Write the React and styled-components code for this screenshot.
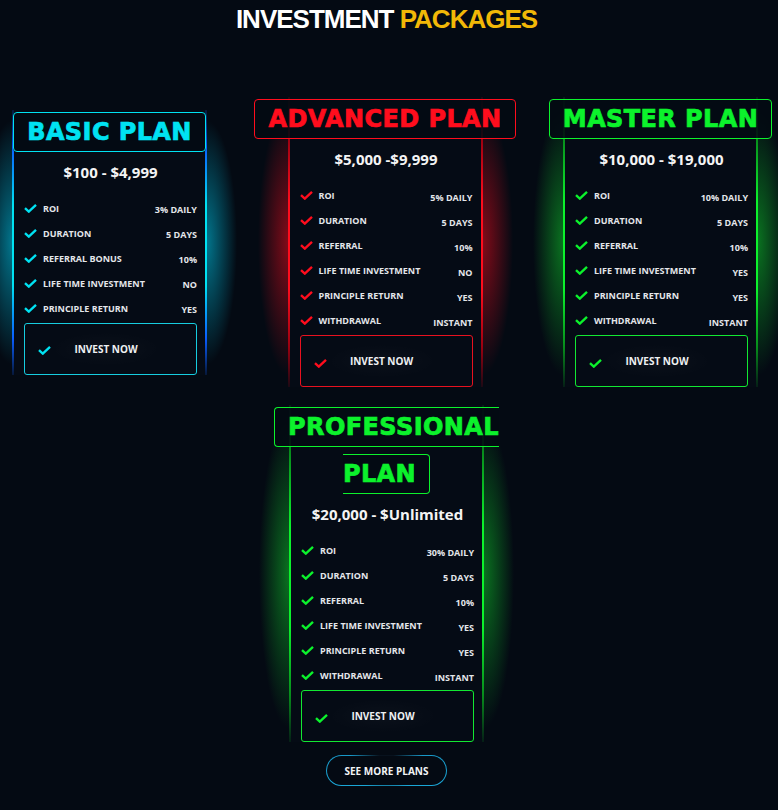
import styled, { createGlobalStyle } from "styled-components";

const GlobalStyle = createGlobalStyle`
  body {
    margin: 0;
    background: #040a13;
    font-family: "Open Sans", "Liberation Sans", sans-serif;
  }
`

const tones = {
    cyan: {accent: '#00e2f2', edge: '#0a5cff', glow: 'rgba(0, 205, 240, 0.55)', button: '#16cde0'},
    red: {accent: '#ff0d1d', edge: '#9a0010', glow: 'rgba(255, 12, 30, 0.5)', button: '#e8111f'},
    green: {accent: '#0cf22c', edge: '#078c1c', glow: 'rgba(18, 240, 48, 0.45)', button: '#12e832'},
}

const plans = [
    {
        name: 'BASIC PLAN', tone: 'cyan', price: '$100 - $4,999',
        rows: [['ROI', '3% DAILY'], ['DURATION', '5 DAYS'], ['REFERRAL BONUS', '10%'],
            ['LIFE TIME INVESTMENT', 'NO'], ['PRINCIPLE RETURN', 'YES']],
    },
    {
        name: 'ADVANCED PLAN', tone: 'red', price: '$5,000 -$9,999',
        rows: [['ROI', '5% DAILY'], ['DURATION', '5 DAYS'], ['REFERRAL', '10%'],
            ['LIFE TIME INVESTMENT', 'NO'], ['PRINCIPLE RETURN', 'YES'], ['WITHDRAWAL', 'INSTANT']],
    },
    {
        name: 'MASTER PLAN', tone: 'green', price: '$10,000 - $19,000',
        rows: [['ROI', '10% DAILY'], ['DURATION', '5 DAYS'], ['REFERRAL', '10%'],
            ['LIFE TIME INVESTMENT', 'YES'], ['PRINCIPLE RETURN', 'YES'], ['WITHDRAWAL', 'INSTANT']],
    },
    {
        name: 'PROFESSIONAL PLAN', tone: 'green', price: '$20,000 - $Unlimited',
        rows: [['ROI', '30% DAILY'], ['DURATION', '5 DAYS'], ['REFERRAL', '10%'],
            ['LIFE TIME INVESTMENT', 'YES'], ['PRINCIPLE RETURN', 'YES'], ['WITHDRAWAL', 'INSTANT']],
    },
]

const Page = styled.div`
  display: flex;
  flex-direction: column;
  align-items: center;
  padding: 4px 5px 40px 0;
`
const Heading = styled.h1`
  margin: 0;
  font-family: "Liberation Sans", Arial, sans-serif;
  font-size: 26px;
  line-height: 30px;
  font-weight: 700;
  letter-spacing: -1px;
  color: #ffffff;

  & > span {
    color: #f2b807;
  }
`
const TopRow = styled.div`
  align-self: stretch;
  display: flex;
  justify-content: space-between;
  align-items: center;
  margin-top: 63px;
  padding: 0 15px 0 12px;
`
const BottomRow = styled.div`
  display: flex;
  justify-content: center;
  margin-top: 18px;
`
const Card = styled.div`
  position: relative;
  box-sizing: border-box;
  width: 195px;
  padding: 0 8px 0 10px;
  background: #050b15;
  border-style: solid;
  border-width: 0 2px;
  border-image: linear-gradient(to bottom,
  ${p => p.$tone.edge}22 0%,
  ${p => p.$tone.edge} 14%,
  ${p => p.$tone.accent} 36%,
  ${p => p.$tone.accent} 66%,
  ${p => p.$tone.edge} 86%,
  ${p => p.$tone.edge}22 100%) 1;

  &::before, &::after {
    content: '';
    position: absolute;
    top: 0;
    bottom: 0;
    width: 30px;
    pointer-events: none;
  }

  &::before {
    right: calc(100% + 2px);
    background: radial-gradient(ellipse 100% 46% at 100% 50%, ${p => p.$tone.glow}, transparent 100%);
  }

  &::after {
    left: calc(100% + 2px);
    background: radial-gradient(ellipse 100% 46% at 0% 50%, ${p => p.$tone.glow}, transparent 100%);
  }
`
const TitleWrap = styled.div`
  position: relative;
  z-index: 1;
  margin: 0 -56px 0 -58px;
  text-align: center;
  line-height: 45px;
`
const TitleBox = styled.span`
  padding: 5px 13px;
  border: 1px solid ${p => p.$color};
  border-radius: 4px;
  background: rgba(4, 10, 19, 0.86);
  color: ${p => p.$color};
  font-family: "DejaVu Sans", Verdana, sans-serif;
  font-size: 24px;
  font-weight: 700;
  letter-spacing: 0.4px;
  -webkit-text-stroke: 0.7px ${p => p.$color};
`
const Price = styled.div`
  margin-top: 5px;
  text-align: center;
  color: #f4f4f4;
  font-size: 15px;
  line-height: 20px;
  font-weight: 700;
`
const Features = styled.ul`
  list-style: none;
  margin: 14px 0 2px;
  padding: 0;
`
const Feature = styled.li`
  display: flex;
  align-items: center;
  height: 25px;
  color: #e4e6ea;
  font-size: 9px;
  font-weight: 700;
`
const Label = styled.span`
  flex: 1;
  margin-left: 6px;
`
const Value = styled.span`
  margin-top: 3px;
`
const InvestButton = styled.button`
  display: flex;
  align-items: center;
  width: 100%;
  height: 52px;
  padding: 0 35px 0 13px;
  background: transparent;
  border: 1px solid ${p => p.$color};
  border-radius: 3px;
  cursor: pointer;

  & > svg {
    margin-top: 4px;
  }
`
const InvestLabel = styled.span`
  flex: 1;
  padding: 10px 0;
  border-radius: 50%;
  background: radial-gradient(ellipse 50% 50% at center, rgba(255, 255, 255, 0.025), transparent);
  color: #eef0f2;
  font-family: "Open Sans", sans-serif;
  font-size: 10px;
  font-weight: 700;
`
const MoreButton = styled.button`
  margin-top: 13px;
  width: 121px;
  height: 31px;
  border: 1px solid transparent;
  border-radius: 16px;
  background: linear-gradient(#040a13, #040a13) padding-box,
  radial-gradient(ellipse 30% 120% at 50% 0%, #08121e 20%, transparent 100%) border-box,
  linear-gradient(#1898c8, #1aa6d6) border-box;
  color: #f2f4f6;
  font-family: "Open Sans", sans-serif;
  font-size: 10px;
  font-weight: 700;
  cursor: pointer;
`

const Check = ({color}) => (
    <svg width="13" height="9" viewBox="0 0 13 9">
        <path d="M1 4.2 L4.8 7.6 L12 0.9" fill="none" stroke={color} strokeWidth="2.4"/>
    </svg>
)

const PlanCard = ({plan}) => {
    const tone = tones[plan.tone]
    return (
        <Card $tone={tone}>
            <TitleWrap>
                <TitleBox $color={tone.accent}>{plan.name}</TitleBox>
            </TitleWrap>
            <Price>{plan.price}</Price>
            <Features>
                {plan.rows.map(([label, value]) => (
                    <Feature key={label}>
                        <Check color={tone.accent}/>
                        <Label>{label}</Label>
                        <Value>{value}</Value>
                    </Feature>
                ))}
            </Features>
            <InvestButton $color={tone.button}>
                <Check color={tone.accent}/>
                <InvestLabel>INVEST NOW</InvestLabel>
            </InvestButton>
        </Card>
    )
}

export default function App() {
    return (
        <Page>
            <GlobalStyle/>
            <Heading>INVESTMENT <span>PACKAGES</span></Heading>
            <TopRow>
                {plans.slice(0, 3).map(plan => <PlanCard key={plan.name} plan={plan}/>)}
            </TopRow>
            <BottomRow>
                <PlanCard plan={plans[3]}/>
            </BottomRow>
            <MoreButton>SEE MORE PLANS</MoreButton>
        </Page>
    )
}
